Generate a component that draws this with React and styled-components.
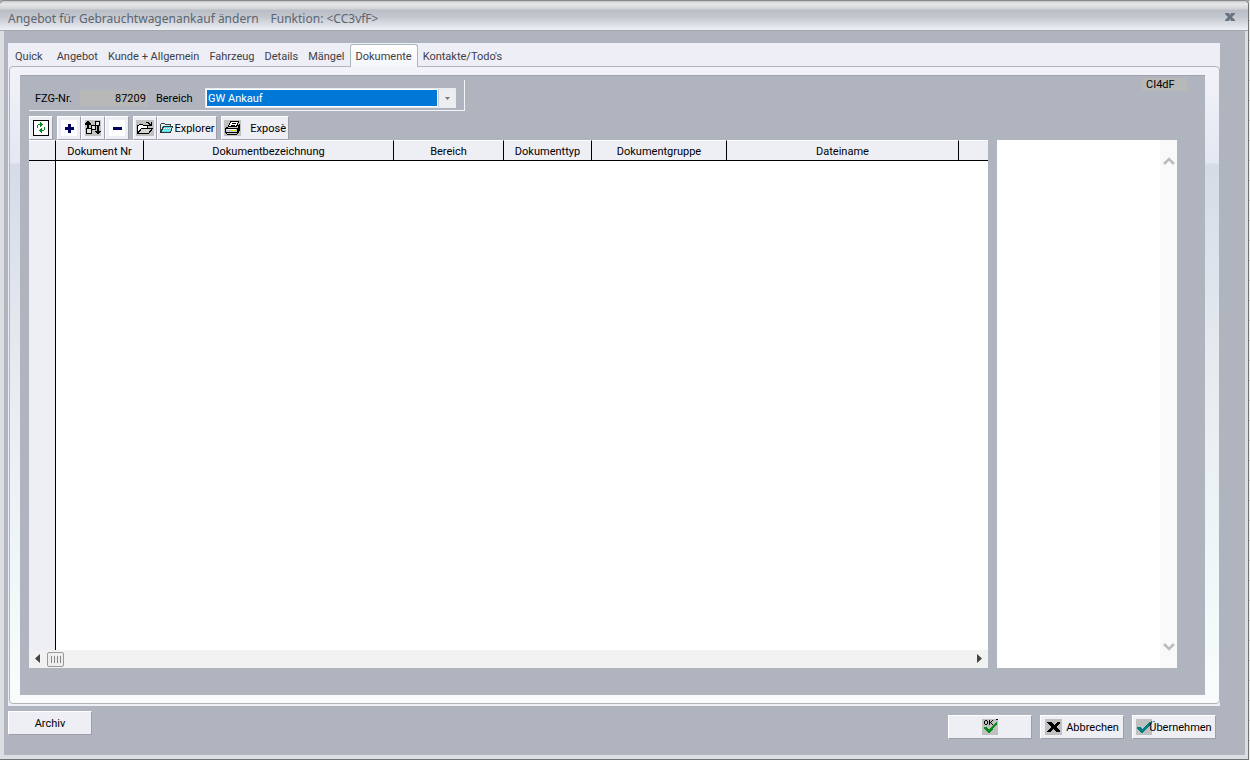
import React from 'react';
import styled, { createGlobalStyle } from 'styled-components';

/* GLOBAL */
const GlobalStyle = createGlobalStyle`
  * {
    box-sizing: border-box;
  }
  body {
    margin: 0;
    background: #fff;
    font-family: Roboto, 'Liberation Sans', sans-serif;
    font-size: 11px;
    color: #000;
  }
  button, select, input {
    font: inherit;
    color: inherit;
  }
  svg {
    flex-shrink: 0;
  }
`;

const tabs = ['Quick', 'Angebot', 'Kunde + Allgemein', 'Fahrzeug', 'Details', 'Mängel', 'Dokumente', "Kontakte/Todo's"];

const columns = [
  { title: 'Dokument Nr', width: 88 },
  { title: 'Dokumentbezeichnung', width: 250 },
  { title: 'Bereich', width: 110 },
  { title: 'Dokumenttyp', width: 88 },
  { title: 'Dokumentgruppe', width: 135 },
  { title: 'Dateiname', width: 232 },
];

/* ICONS */
const RefreshIcon = () => (
  <svg width="16" height="16" viewBox="0 0 16 16" shapeRendering="crispEdges">
    <rect x="0.5" y="0.5" width="15" height="15" fill="#fff" stroke="#000" />
    <path d="M7 2h1v1h1v1h1v1h-1v1h-1v1h-1v-2h-2v3h-1v-3h1v-1h2zM11 7h1v3h-1v1h-2v2h-1v-1h-1v-1h-1v-1h1v-1h1v-1h1v2h2z" fill="#0a8a1a" />
  </svg>
);

const PlusIcon = () => (
  <svg width="16" height="16" viewBox="0 0 16 16" shapeRendering="crispEdges">
    <rect width="16" height="16" fill="#fff" />
    <path d="M7 4h3v3h3v3h-3v3h-3v-3h-3v-3h3z" fill="#000060" />
  </svg>
);

const MinusIcon = () => (
  <svg width="16" height="16" viewBox="0 0 16 16" shapeRendering="crispEdges">
    <rect width="16" height="16" fill="#fff" />
    <path d="M4 7h9v3h-9z" fill="#000060" />
  </svg>
);

const SortIcon = () => (
  <svg width="16" height="16" viewBox="0 0 16 16" shapeRendering="crispEdges">
    <rect width="16" height="16" fill="#c0c0c0" />
    <path d="M2 1h2v1h1v1h1v2h-2v3h-2v-3h-2v-2h1v-1h1zM1 8h6v6h-6zM6 5h5v5h-5zM10 1h5v5h-5zM12 6h2v5h2v1h-1v1h-1v1h-2v-1h-1v-1h-1v-1h2z" fill="#000" />
    <path d="M2 9h4v4h-4zM7 6h3v3h-3zM11 2h3v3h-3z" fill="#e0e0e0" />
  </svg>
);

const OpenIcon = () => (
  <svg width="18" height="16" viewBox="0 0 18 16" shapeRendering="crispEdges">
    <rect width="18" height="16" fill="#c0c0c0" />
    <path d="M1.5 13.5v-8h1l1-1h3l1 1h4v3" fill="#fff" stroke="#000" />
    <path d="M1.5 13.5l4-5h11l-4 5z" fill="#d4d4d4" stroke="#000" />
    <path d="M9 3h1v-1h3v1h1v1h1v-2h1v4h-4v-1h1v-1h-1v-1h-3v1h-1z" fill="#000" />
  </svg>
);

const ExplorerIcon = () => (
  <svg width="14" height="12" viewBox="0 0 14 12" shapeRendering="crispEdges">
    <path d="M1.5 10.5v-8l1-1h3l1 1h5v2" fill="#c9f3f3" stroke="#444" />
    <path d="M1.5 10.5l3-6h9l-2 6z" fill="#55e2ea" stroke="#333" />
    <path d="M5 6h1v1h-1zM7 6h1v1h-1zM9 6h1v1h-1zM11 6h1v1h-1zM4 8h1v1h-1zM6 8h1v1h-1zM8 8h1v1h-1zM10 8h1v1h-1z" fill="#fff" />
  </svg>
);

const PrinterIcon = () => (
  <svg width="17" height="16" viewBox="0 0 17 16" shapeRendering="crispEdges">
    <rect width="17" height="16" fill="#c0c0c0" />
    <path d="M4.5 6.5l2-5h8l-2 5z" fill="#fff" stroke="#000" />
    <path d="M8 3h4v1h-4zM7 5h4v1h-4z" fill="#000" />
    <path d="M1.5 8.5l3-2h8l3-2v6l-3 4h-9l-2-2z" fill="#c8c8c8" stroke="#000" />
    <path d="M2 8h11v1h-11zM2 12h11v1h-11zM13 8h1v4h-1zM14 6h1v5h-1z" fill="#000" />
    <path d="M3 9h9v1h-9z" fill="#fff" />
    <path d="M8 10h3v1h-3z" fill="#e6e600" />
  </svg>
);

const OkIcon = () => (
  <svg width="16" height="16" viewBox="0 0 16 16" shapeRendering="crispEdges">
    <rect width="16" height="16" fill="#c0c0c0" />
    <path d="M3 1h2v1h-2zM2 2h1v3h-1zM5 2h1v3h-1zM3 5h2v1h-2zM7 1h1v5h-1zM8 3h1v1h-1zM9 2h1v1h-1zM10 1h1v1h-1zM9 4h1v1h-1zM10 5h1v1h-1zM14 0h2v1h-2z" fill="#000" />
    <path d="M2 8h2l3 3 7-8h1v2l-7 9h-2l-5-5z" fill="#0a8a1a" />
  </svg>
);

const CancelIcon = () => (
  <svg width="17" height="16" viewBox="0 0 17 16" shapeRendering="crispEdges">
    <rect width="17" height="16" fill="#c0c0c0" />
    <path d="M2 3h4l3 3 3-3h3v1l-4 4 4 4v1h-4l-3-3-3 3h-3v-1l4-4-4-4z" fill="#000" />
  </svg>
);

const ApplyIcon = () => (
  <svg width="16" height="16" viewBox="0 0 16 16" shapeRendering="crispEdges">
    <rect width="16" height="16" fill="#c0c0c0" />
    <path d="M1 8h3l2 2 7-7h3v1l-9 10h-2l-4-4z" fill="#008080" />
  </svg>
);

const Chevron = ({ down }) => (
  <svg width="12" height="9" viewBox="0 0 12 9">
    <path d={down ? 'M1 1l5 5 5-5' : 'M1 8l5-5 5 5'} fill="none" stroke="#bcbcbc" strokeWidth="2.5" />
  </svg>
);

const Arrow = ({ left }) => (
  <svg width="6" height="10" viewBox="0 0 6 10">
    <path d={left ? 'M5 0v9l-5-4.5z' : 'M1 0v9l5-4.5z'} fill="#444" />
  </svg>
);

function App() {
  return (
    <>
      <GlobalStyle />
      <Screen>
        <Window>
          <TitleBar>
            <Title>
              Angebot für Gebrauchtwagenankauf ändern<span>Funktion: &lt;CC3vfF&gt;</span>
            </Title>
            <CloseButton aria-label="Schließen">
              <svg width="10" height="9" viewBox="0 0 10 9">
                <path d="M0 0h4l1 2 1-2h4v1L7 4l3 3v1H6L5 6 4 8H0V7l3-3L0 1z" fill="#687482" />
              </svg>
            </CloseButton>
          </TitleBar>
          <Body>
            <TabArea>
              <TabList role="tablist">
                {tabs.map((name) => (
                  <Tab key={name} role="tab" aria-selected={name === 'Dokumente'} $active={name === 'Dokumente'}>
                    {name}
                  </Tab>
                ))}
              </TabList>
              <TabPage>
                <Panel>
                  <FilterRow>
                    <Filter>
                      <label htmlFor="fzg">FZG-Nr.</label>
                      <NumberInput id="fzg" defaultValue="87209" readOnly />
                      <label htmlFor="bereich">Bereich</label>
                      <SelectBox>
                        <Select id="bereich">
                          <option>GW Ankauf</option>
                        </Select>
                        <SelectArrow>
                          <svg width="5" height="3" viewBox="0 0 5 3">
                            <path d="M0 0h5L2.5 3z" fill="#777" />
                          </svg>
                        </SelectArrow>
                      </SelectBox>
                    </Filter>
                    <Code>CI4dF</Code>
                  </FilterRow>
                  <Toolbar>
                    <ToolButton aria-label="Aktualisieren"><RefreshIcon /></ToolButton>
                    <ToolGroup>
                      <ToolButton aria-label="Neu"><PlusIcon /></ToolButton>
                      <ToolButton aria-label="Sortieren"><SortIcon /></ToolButton>
                      <ToolButton aria-label="Entfernen"><MinusIcon /></ToolButton>
                    </ToolGroup>
                    <ToolGroup>
                      <ToolButton aria-label="Öffnen"><OpenIcon /></ToolButton>
                      <ToolButton $width={60}><ExplorerIcon />Explorer</ToolButton>
                    </ToolGroup>
                    <ToolButton $width={68} $spread><PrinterIcon />Exposè</ToolButton>
                  </Toolbar>
                  <Content>
                    <Grid>
                      <TableArea>
                        <Table>
                          <colgroup>
                            <col width="27" />
                            {columns.map((c) => (
                              <col key={c.title} width={c.width} />
                            ))}
                            <col />
                          </colgroup>
                          <thead>
                            <tr>
                              <Th />
                              {columns.map((c) => (
                                <Th key={c.title}>{c.title}</Th>
                              ))}
                              <Th />
                            </tr>
                          </thead>
                          <tbody>
                            <tr>
                              <RowHead />
                              <td colSpan={7} />
                            </tr>
                          </tbody>
                        </Table>
                      </TableArea>
                      <ScrollBar>
                        <Arrow left />
                        <Thumb />
                        <Arrow />
                      </ScrollBar>
                    </Grid>
                    <Preview>
                      <SideScroll>
                        <Chevron />
                        <Chevron down />
                      </SideScroll>
                    </Preview>
                  </Content>
                </Panel>
              </TabPage>
            </TabArea>
            <Footer>
              <FormButton>Archiv</FormButton>
              <FooterGroup>
                <FormButton aria-label="OK"><OkIcon /></FormButton>
                <FormButton><CancelIcon /><Caption>Abbrechen</Caption></FormButton>
                <FormButton><ApplyIcon /><Caption $tight>Übernehmen</Caption></FormButton>
              </FooterGroup>
            </Footer>
          </Body>
        </Window>
        <Backdrop />
      </Screen>
    </>
  );
}

/* STYLED-COMPONENTS */
const Screen = styled.div`
  display: flex;
  min-height: 100vh;
  background: #a5a7ab;
`;

const Window = styled.div`
  flex: 1;
  display: flex;
  flex-direction: column;
  background: #b0b4be;
  border-top: 1px solid #85888e;
  border-right: 1px solid #6f7378;
  border-bottom: 1px solid #6f7378;
  border-radius: 5px 5px 0 0;
  overflow: hidden;
`;

const Backdrop = styled.div`
  width: 1px;
  background: repeating-linear-gradient(#c4c6c8 0 1px, #f1f2f2 1px 20px);
`;

const TitleBar = styled.header`
  display: flex;
  align-items: center;
  justify-content: space-between;
  height: 30px;
  padding: 5px 11px 0 8px;
  background: linear-gradient(#c9cacc 0, #e8e9ea 3px, #d0d2d5 8px, #b9bdc5 9px, #c3c7ce 16px, #e7ebef 27px, #eef1f4 29px);
  border-bottom: 1px solid #a2a6ad;
`;

const Title = styled.h1`
  margin: 0;
  font: 12px 'Noto Sans', 'DejaVu Sans', sans-serif;
  color: #5c6470;
  span {
    margin-left: 12px;
  }
`;

const CloseButton = styled.button`
  display: flex;
  padding: 0 2px 2px;
  border: none;
  background: none;
`;

const Body = styled.main`
  flex: 1;
  display: flex;
  flex-direction: column;
  padding: 12px 25px 16px 4px;
  border: solid #dcdfe2;
  border-width: 0 3px 4px 4px;
`;

const TabArea = styled.section`
  flex: 1;
  display: flex;
  flex-direction: column;
  background: #eeeef6;
  padding: 0 0 2px 1px;
`;

const TabList = styled.div`
  display: flex;
  align-items: flex-end;
  height: 23px;
  padding-left: 1px;
`;

const Tab = styled.button`
  position: relative;
  height: ${(props) => (props.$active ? '23px' : '21px')};
  margin-bottom: ${(props) => (props.$active ? '-1px' : '0')};
  padding: 0 ${(props) => (props.$active ? '5px' : '4px')};
  white-space: nowrap;
  color: #3d4047;
  background: ${(props) => (props.$active ? 'linear-gradient(#fff, #f3f6fa)' : 'none')};
  border: 1px solid ${(props) => (props.$active ? '#a9b8bd' : 'transparent')};
  border-bottom: none;
  border-radius: 3px 3px 0 0;
  &:first-child {
    margin-right: 4px;
  }
`;

const TabPage = styled.div`
  flex: 1;
  display: flex;
  padding: 8px 14px 8px 10px;
  border: 1px solid #b2b4bb;
  border-radius: 4px;
  background: linear-gradient(#f2f2f9 0, #e4e8f2 96px, #d5dce8 97px, #e6ebf0 300px, #f2fafa 560px, #fafcfc);
`;

const Panel = styled.div`
  flex: 1;
  display: flex;
  flex-direction: column;
  padding: 2px 28px 27px 9px;
  background: #b0b4be;
  border-top: 1px solid #a2a5ad;
`;

const FilterRow = styled.div`
  display: flex;
  justify-content: space-between;
  align-items: flex-start;
`;

const Filter = styled.div`
  display: flex;
  align-items: center;
  gap: 8px;
  width: 436px;
  height: 31px;
  margin-top: 2px;
  padding: 6px 0 0 6px;
  border: solid #f4f5f8;
  border-width: 0 1px 1px 0;
`;

const NumberInput = styled.input`
  width: 68px;
  height: 16px;
  padding: 0 2px;
  border: none;
  background: #b8b8b8;
  text-align: right;
`;

const SelectBox = styled.div`
  display: flex;
  width: 251px;
  height: 20px;
  margin-left: auto;
  margin-right: 8px;
  border: 1px solid #e8ebf0;
  background: #fff;
`;

const Select = styled.select`
  flex: 1;
  margin: 1px;
  padding: 0 1px;
  border: none;
  appearance: none;
  background: #0078d7;
  color: #fff;
`;

const SelectArrow = styled.span`
  display: flex;
  align-items: center;
  justify-content: center;
  width: 17px;
  background: #eceef2;
  border-left: 1px solid #c8cbd0;
`;

const Code = styled.span`
  width: 45px;
  margin-right: -10px;
  padding-left: 4px;
  line-height: 13px;
  background: #b8b8b8;
`;

const Toolbar = styled.div`
  display: flex;
  gap: 4px;
  padding: 5px 0 0;
`;

const ToolGroup = styled.div`
  display: flex;
`;

const ToolButton = styled.button`
  display: flex;
  align-items: center;
  justify-content: ${(props) => (props.$spread ? 'space-between' : 'center')};
  gap: 1px;
  width: ${(props) => props.$width || 24}px;
  height: 24px;
  padding: 0 2px;
  background: #eeeef5;
  border: 1px solid;
  border-color: #fff #9c9ead #9c9ead #fff;
`;

const Content = styled.div`
  flex: 1;
  display: flex;
  gap: 9px;
`;

const Grid = styled.div`
  flex: 1;
  display: flex;
  flex-direction: column;
  background: #fff;
`;

const TableArea = styled.div`
  flex: 1;
  display: flex;
`;

const Table = styled.table`
  width: 100%;
  table-layout: fixed;
  border-collapse: separate;
  border-spacing: 0;
  td {
    padding: 0;
  }
`;

const Th = styled.th`
  height: 21px;
  padding: 2px 0 0;
  font-weight: normal;
  background: #eeeef5;
  border-top: 1px solid #fff;
  border-right: 1px solid #000;
  border-bottom: 1px solid #000;
  &:last-child {
    border-right: none;
  }
`;

const RowHead = styled.td`
  background: #eeeef5;
  border-right: 1px solid #000;
`;

const ScrollBar = styled.div`
  display: flex;
  align-items: center;
  height: 18px;
  padding: 0 6px;
  background: #f2f2f2;
  svg:last-child {
    margin-left: auto;
  }
`;

const Thumb = styled.div`
  width: 17px;
  height: 15px;
  margin-left: 6px;
  border: 1px solid #999;
  border-radius: 2px;
  background: repeating-linear-gradient(90deg, #888 0 1px, #eee 1px 3px) center / 10px 7px no-repeat, #eee;
`;

const Preview = styled.aside`
  display: flex;
  justify-content: flex-end;
  width: 180px;
  background: #fff;
`;

const SideScroll = styled.div`
  display: flex;
  flex-direction: column;
  justify-content: space-between;
  align-items: center;
  width: 17px;
  padding: 16px 0;
  background: #f9f9f9;
`;

const Footer = styled.footer`
  display: flex;
  justify-content: space-between;
  align-items: flex-start;
  padding: 5px 4px 0 0;
`;

const FooterGroup = styled.div`
  display: flex;
  gap: 8px;
  padding-top: 4px;
`;

const FormButton = styled.button`
  display: flex;
  align-items: center;
  justify-content: center;
  width: 84px;
  height: 24px;
  padding: 0;
  background: #eeeef5;
  border: 1px solid;
  border-color: #fff #9c9ead #9c9ead #fff;
`;

const Caption = styled.span`
  margin-left: ${(props) => (props.$tight ? '-3px' : '4px')};
`;

export default App;
